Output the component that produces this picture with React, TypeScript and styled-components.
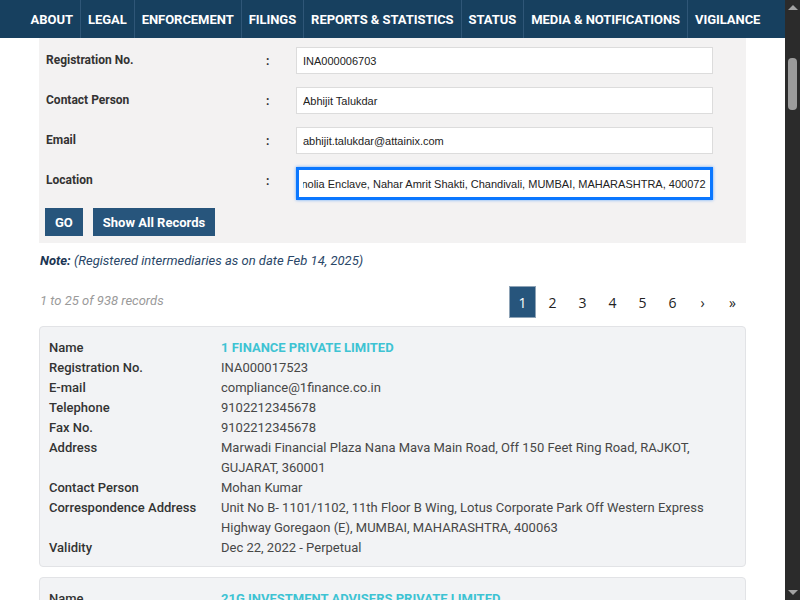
import React, { useEffect, useRef } from 'react';
import styled, { createGlobalStyle } from 'styled-components';

const GlobalStyle = createGlobalStyle`
  html, body {
    margin: 0;
    padding: 0;
    overflow: hidden;
    background: #fff;
  }
  body {
    font-family: Roboto, "Liberation Sans", Arial, sans-serif;
  }
  * { box-sizing: border-box; }
`;

const Page = styled.div`
  display: flex;
  height: 600px;
  overflow: hidden;
`;

const Main = styled.div`
  flex: 1;
  display: flex;
  flex-direction: column;
  overflow: hidden;
`;

const NavBar = styled.nav`
  height: 38px;
  flex-shrink: 0;
  background: #17405f;
  display: flex;
  justify-content: center;
  align-items: stretch;
  padding-left: 6px;
`;

const NavItem = styled.a<{ first?: boolean }>`
  display: flex;
  align-items: center;
  padding: 0 7px;
  color: #fff;
  font-size: 13px;
  font-weight: 700;
  letter-spacing: -0.05px;
  text-decoration: none;
  border-left: ${(p) => (p.first ? 'none' : '1px solid #2f5677')};
`;

const Container = styled.div`
  width: 707px;
  margin: 0 auto;
`;

const SearchPanel = styled.div`
  background: #f3f2f2;
  padding: 9px 7px 7px 7px;
`;

const FieldRow = styled.div`
  display: grid;
  grid-template-columns: 220px 30px 417px;
  align-items: start;
  height: 40px;
`;

const FieldLabel = styled.label`
  font-size: 12px;
  font-weight: 700;
  color: #333;
  padding-top: 6px;
`;

const Colon = styled.span`
  font-size: 12px;
  font-weight: 700;
  color: #333;
  padding-top: 7px;
`;

const TextInput = styled.input<{ focused?: boolean }>`
  width: 100%;
  height: ${(p) => (p.focused ? '33px' : '27px')};
  border: ${(p) => (p.focused ? '3px solid #0a77ff' : '1px solid #dcdcdc')};
  box-shadow: ${(p) => (p.focused ? '0 0 3px rgba(10, 119, 255, 0.6)' : 'none')};
  background: #fff;
  padding: 0 ${(p) => (p.focused ? '4px' : '6px')};
  font-family: "Liberation Sans", Arial, sans-serif;
  font-size: 11px;
  color: #222;
  caret-color: #000;
  outline: none;
`;

const ButtonRow = styled.div`
  display: flex;
  gap: 10px;
  padding-top: 1px;
  margin-left: -1px;
`;

const Button = styled.button`
  height: 28px;
  padding: 0 10px;
  background: #27557c;
  color: #fff;
  border: none;
  font-family: Roboto, sans-serif;
  font-size: 13px;
  font-weight: 700;
  cursor: pointer;
`;

const Note = styled.p`
  margin: 10px 0 0 1px;
  font-size: 13px;
  font-style: italic;
  color: #2a4768;
  line-height: 16px;
  b { color: #1b3553; }
`;

const ResultsBar = styled.div`
  display: flex;
  justify-content: space-between;
  align-items: center;
  margin-top: 17px;
  height: 32px;
`;

const RecordCount = styled.span`
  font-size: 13px;
  font-style: italic;
  color: #9a9a9a;
  padding-left: 1px;
  margin-top: -4px;
`;

const Pagination = styled.ul`
  display: flex;
  list-style: none;
  margin: 0;
  padding: 0;
  gap: 3px;
`;

const PageLink = styled.li<{ active?: boolean }>`
  width: 27px;
  height: 32px;
  display: flex;
  align-items: center;
  justify-content: center;
  font-family: "Open Sans", "Liberation Sans", sans-serif;
  font-size: 14px;
  color: ${(p) => (p.active ? '#fff' : '#222')};
  background: ${(p) => (p.active ? '#27557c' : 'transparent')};
  border: 1px solid ${(p) => (p.active ? '#8ea3b6' : 'transparent')};
  cursor: pointer;
`;

const Card = styled.div`
  margin-top: 8px;
  background: #f2f3f5;
  border: 1px solid #e2e3e6;
  border-radius: 4px;
  padding: 11px 10px 8px 9px;
  display: grid;
  grid-template-columns: 172px 1fr;
  line-height: 20px;
  font-size: 13px;
  & + & { margin-top: 10px; }
`;

const CardLabel = styled.div`
  color: #333;
  font-weight: 500;
`;

const CardValue = styled.div<{ highlight?: boolean }>`
  color: ${(p) => (p.highlight ? '#3ec3d3' : '#474747')};
  font-weight: ${(p) => (p.highlight ? 700 : 400)};
  padding-right: 28px;
`;

const ScrollTrack = styled.div`
  width: 15px;
  flex-shrink: 0;
  background: #2b2b2b;
  display: flex;
  flex-direction: column;
  align-items: center;
`;

const ScrollArrow = styled.div<{ down?: boolean }>`
  width: 0;
  height: 0;
  margin: ${(p) => (p.down ? '0 0 5px' : '5px 0 0')};
  border-left: 5px solid transparent;
  border-right: 5px solid transparent;
  ${(p) => (p.down ? 'border-top: 5px solid #a3a3a3;' : 'border-bottom: 5px solid #a3a3a3;')}
`;

const ScrollThumb = styled.div`
  width: 9px;
  height: 52px;
  margin-top: 48px;
  border-radius: 4px;
  background: #9b9b9b;
`;

const Spacer = styled.div`
  flex: 1;
`;

const navItems = [
  'ABOUT',
  'LEGAL',
  'ENFORCEMENT',
  'FILINGS',
  'REPORTS & STATISTICS',
  'STATUS',
  'MEDIA & NOTIFICATIONS',
  'VIGILANCE',
];

type Record = {
  name: string;
  regNo: string;
  email: string;
  phone: string;
  fax: string;
  address: string;
  contact: string;
  correspondence: string;
  validity: string;
};

const records: Record[] = [
  {
    name: '1 FINANCE PRIVATE LIMITED',
    regNo: 'INA000017523',
    email: 'compliance@1finance.co.in',
    phone: '9102212345678',
    fax: '9102212345678',
    address: 'Marwadi Financial Plaza Nana Mava Main Road, Off 150 Feet Ring Road, RAJKOT, GUJARAT, 360001',
    contact: 'Mohan Kumar',
    correspondence:
      'Unit No B- 1101/1102, 11th Floor B Wing, Lotus Corporate Park Off Western Express Highway Goregaon (E), MUMBAI, MAHARASHTRA, 400063',
    validity: 'Dec 22, 2022 - Perpetual',
  },
  {
    name: '21G INVESTMENT ADVISERS PRIVATE LIMITED',
    regNo: 'INA000019071',
    email: 'compliance@21g.in',
    phone: '9122222222222',
    fax: '',
    address: 'Mumbai, MAHARASHTRA',
    contact: '',
    correspondence: '',
    validity: '',
  },
];

const RecordCard: React.FC<{ r: Record }> = ({ r }) => (
  <Card>
    <CardLabel>Name</CardLabel>
    <CardValue highlight>{r.name}</CardValue>
    <CardLabel>Registration No.</CardLabel>
    <CardValue>{r.regNo}</CardValue>
    <CardLabel>E-mail</CardLabel>
    <CardValue>{r.email}</CardValue>
    <CardLabel>Telephone</CardLabel>
    <CardValue>{r.phone}</CardValue>
    <CardLabel>Fax No.</CardLabel>
    <CardValue>{r.fax}</CardValue>
    <CardLabel>Address</CardLabel>
    <CardValue>{r.address}</CardValue>
    <CardLabel>Contact Person</CardLabel>
    <CardValue>{r.contact}</CardValue>
    <CardLabel>Correspondence Address</CardLabel>
    <CardValue>{r.correspondence}</CardValue>
    <CardLabel>Validity</CardLabel>
    <CardValue>{r.validity}</CardValue>
  </Card>
);

export default function App() {
  const locationRef = useRef<HTMLInputElement>(null);

  useEffect(() => {
    const el = locationRef.current;
    if (el) {
      const len = el.value.length;
      el.focus();
      el.setSelectionRange(len, len);
      el.scrollLeft = el.scrollWidth;
    }
  }, []);

  return (
    <>
      <GlobalStyle />
      <Page>
        <Main>
          <NavBar>
            {navItems.map((item, i) => (
              <NavItem key={item} first={i === 0} href="#">
                {item}
              </NavItem>
            ))}
          </NavBar>
          <Container>
            <SearchPanel>
              <FieldRow>
                <FieldLabel>Registration No.</FieldLabel>
                <Colon>:</Colon>
                <TextInput defaultValue="INA000006703" />
              </FieldRow>
              <FieldRow>
                <FieldLabel>Contact Person</FieldLabel>
                <Colon>:</Colon>
                <TextInput defaultValue="Abhijit Talukdar" />
              </FieldRow>
              <FieldRow>
                <FieldLabel>Email</FieldLabel>
                <Colon>:</Colon>
                <TextInput defaultValue="abhijit.talukdar@attainix.com" />
              </FieldRow>
              <FieldRow>
                <FieldLabel>Location</FieldLabel>
                <Colon>:</Colon>
                <TextInput
                  ref={locationRef}
                  focused
                  defaultValue="Magnolia Enclave, Nahar Amrit Shakti, Chandivali, MUMBAI, MAHARASHTRA, 400072"
                />
              </FieldRow>
              <ButtonRow>
                <Button>GO</Button>
                <Button>Show All Records</Button>
              </ButtonRow>
            </SearchPanel>
            <Note>
              <b>Note:</b> (Registered intermediaries as on date Feb 14, 2025)
            </Note>
            <ResultsBar>
              <RecordCount>1 to 25 of 938 records</RecordCount>
              <Pagination>
                <PageLink active>1</PageLink>
                <PageLink>2</PageLink>
                <PageLink>3</PageLink>
                <PageLink>4</PageLink>
                <PageLink>5</PageLink>
                <PageLink>6</PageLink>
                <PageLink>›</PageLink>
                <PageLink>»</PageLink>
              </Pagination>
            </ResultsBar>
            {records.map((r) => (
              <RecordCard key={r.regNo} r={r} />
            ))}
          </Container>
        </Main>
        <ScrollTrack>
          <ScrollArrow />
          <ScrollThumb />
          <Spacer />
          <ScrollArrow down />
        </ScrollTrack>
      </Page>
    </>
  );
}
